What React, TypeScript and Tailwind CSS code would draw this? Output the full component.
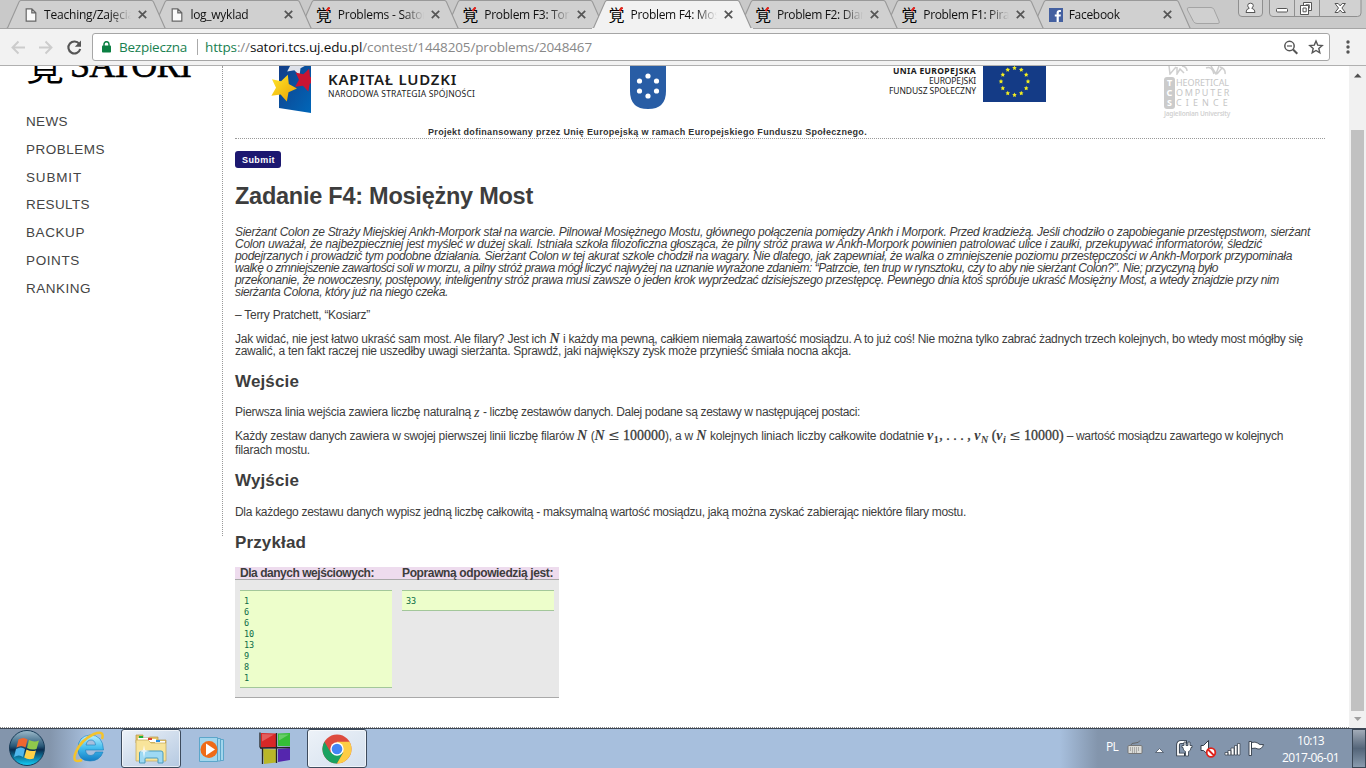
import { useLayoutEffect, useRef, type ReactNode } from "react";

/* A single line of text whose letter spacing is computed to fill a given width. */
function Fit({ w, className = "", children }: { w: number; className?: string; children: ReactNode }) {
  const ref = useRef<HTMLSpanElement>(null);
  useLayoutEffect(() => {
    const el = ref.current;
    if (!el) return;
    el.style.letterSpacing = "0px";
    const w0 = el.getBoundingClientRect().width;
    el.style.letterSpacing = "1px";
    const w1 = el.getBoundingClientRect().width;
    el.style.letterSpacing = w1 > w0 ? `${(w - w0) / (w1 - w0)}px` : "0px";
  }, [w]);
  return (
    <div className={`flex whitespace-pre ${className}`}>
      <span ref={ref} className="inline-block shrink-0">{children}</span>
    </div>
  );
}

function PageIcon() {
  return (
    <svg width="12" height="14" viewBox="0 0 12 14" fill="#fafafa" stroke="#666" strokeWidth="1.2">
      <path d="M1.2.8h5.6l4 4v8.4H1.2zM6.8.8v4h4" />
    </svg>
  );
}

function KanjiIcon() {
  return (
    <span className="relative block h-4 w-4 font-['Noto_Sans_CJK_JP',sans-serif] text-[16px] leading-[15px] text-black">
      覚
      <svg className="absolute top-0 left-[9px]" width="5" height="5" viewBox="0 0 5 5">
        <path d="M4.5.3 1.5 4" stroke="#e8231e" strokeWidth="2" />
      </svg>
    </span>
  );
}

function FacebookIcon() {
  return (
    <svg width="14" height="14" viewBox="0 0 14 14">
      <rect width="14" height="14" fill="#4460a0" />
      <path d="M7.6 14V8.6H5.8V6.5h1.8V4.8c0-1.9 1.1-2.9 2.8-2.9h1.5v2h-1c-.9 0-1.1.4-1.1 1.1v1.5h2.1l-.3 2.1H9.8V14z" fill="#fff" />
    </svg>
  );
}

type Tab = { title: string; icon: "page" | "kanji" | "fb"; w: number; z: string; active?: boolean };
const tabs: Tab[] = [
  { title: "Teaching/Zajęcia", icon: "page", w: 90, z: "z-[8]" },
  { title: "log_wyklad", icon: "page", w: 58, z: "z-[7]" },
  { title: "Problems - Sator", icon: "kanji", w: 89, z: "z-[6]" },
  { title: "Problem F3: Tort", icon: "kanji", w: 89, z: "z-[5]" },
  { title: "Problem F4: Mos", icon: "kanji", w: 89, z: "z-[9]", active: true },
  { title: "Problem F2: Dian", icon: "kanji", w: 90, z: "z-[3]" },
  { title: "Problem F1: Pirat", icon: "kanji", w: 90, z: "z-[2]" },
  { title: "Facebook", icon: "fb", w: 51, z: "z-[1]" },
];

function TabItem({ tab }: { tab: Tab }) {
  return (
    <div className={`relative flex h-[29px] w-[146.4px] shrink-0 items-center pl-[18px] ${tab.z}`}>
      <svg className="absolute top-0 left-0" width="162" height="29" viewBox="0 0 162 29">
        <path d="M0 28.5L1.500 28L13 2Q14 .5 15 .5H145.500Q146.500 .5 147.500 2L159 28L160 28.500" fill={tab.active ? "#f2f2f2" : "#d0d0d0"} stroke="#999" strokeWidth="1.1" />
        <path d="M0 28.500H161" stroke={tab.active ? "#f2f2f2" : "#a5a5a5"} />
      </svg>
      <div className="relative flex w-5 items-center">
        {tab.icon === "page" ? <span className="pl-[1px]"><PageIcon /></span> : tab.icon === "kanji" ? <span className="-ml-[1px]"><KanjiIcon /></span> : <FacebookIcon />}
      </div>
      <div className={`relative w-[87px] overflow-hidden [mask-image:linear-gradient(to_right,black_66px,transparent_87px)] ${tab.icon === "kanji" ? "pl-[1px]" : ""}`}>
        <Fit w={tab.w} className="text-[12px] leading-[18px] text-[#111]">{tab.title}</Fit>
      </div>
      <svg className="relative ml-[7px]" width="9" height="9" viewBox="0 0 9 9" stroke="#555" strokeWidth="1.7">
        <path d="M.8.8l7.400 7.400M8.200.8L.8 8.200" />
      </svg>
    </div>
  );
}

function WindowControls() {
  return (
    <div className="absolute top-0 right-0 z-10 flex pr-[3px]">
      <svg width="125" height="18" viewBox="0 0 125 18" fill="#d1d1d1" stroke="#8f8f8f">
        <path d="M.5 0v13q0 3.500 3.500 3.500h17q3.500 0 3.500-3.500V0" />
        <path d="M31.500 0v13q0 3.500 3.500 3.500h84.500q3.500 0 3.500-3.500V0M56.500 0v16M81.500 0v16" />
        <g stroke="#555" fill="#fff">
          <path d="M8 12.500q0-3.500 3.300-4.300-1.600-1-1.600-2.700 0-2.300 2.800-2.300t2.800 2.300q0 1.700-1.600 2.700 3.300.8 3.300 4.300z" />
          <rect x="38.500" y="8.500" width="11" height="3.500" rx="1" />
          <path d="M65.500 2.500h8v8h-8zM67.800 4.800h3.500v3.500h-3.500z" />
          <path d="M62.500 5.500h8v9h-8zM65 8h3.200v3.800H65z" />
          <path d="M97 3.500h3.200l2 2.400 2-2.400h3.200l-3.500 4.500 3.500 4.500h-3.200l-2-2.400-2 2.400H97l3.500-4.500z" />
        </g>
      </svg>
    </div>
  );
}

function Chrome() {
  return (
    <header className="shrink-0">
      <div className="relative flex h-[29px] border-b border-[#a5a5a5] bg-[#c9c9c9] pl-[6px]">
        {tabs.map((t) => <TabItem key={t.title} tab={t} />)}
        <svg className="ml-[9px] mt-[6px]" width="36" height="19" viewBox="0 0 36 19">
          <path d="M3 1.500H25q2 0 3 2L33 15q1 2.500-1 2.500H11q-2.500 0-3.500-2L1.500 4Q.5 1.500 3 1.500z" fill="#d0d0d0" stroke="#a4a4a4" />
        </svg>
        <WindowControls />
      </div>
      <div className="flex h-[37px] items-center border-b border-[#b0b0b0] bg-[#f2f2f2] pb-[1px] pl-[10px]">
        <svg width="82" height="20" viewBox="0 0 82 20" fill="none" stroke="#ccc" strokeWidth="1.9">
          <path d="M15 10.500H2.500M8.500 4.500l-6 6 6 6M29 10.500h12.500M35.500 4.500l6 6-6 6" />
          <path d="M69.300 7A6 6 0 1 0 70.200 12" stroke="#555" strokeWidth="2.100" />
          <path d="M71 3.500v6.200h-6.200z" fill="#555" stroke="none" />
        </svg>
        <div className="flex h-[28px] w-[1238px] items-center rounded-[3px] border border-[#a6a6a6] bg-white pl-[9px]">
          <svg width="9" height="12" viewBox="0 0 9 12">
            <rect x="0" y="4.500" width="9" height="7" rx=".8" fill="#0b8043" />
            <path d="M2 5V3.200a2.500 2.500 0 0 1 5 0V5" fill="none" stroke="#0b8043" strokeWidth="1.500" />
          </svg>
          <Fit w={68} className="ml-[8px] w-[78px] text-[13.500px] leading-[20px] text-[#188050]">Bezpieczna</Fit>
          <div className="mr-[7px] h-[16px] w-px bg-[#aaa]" />
          <Fit w={387} className="w-[1078px] text-[13.500px] leading-[20px] text-[#888]">
            <span className="text-[#188050]">https</span>://<span className="text-[#111]">satori.tcs.uj.edu.pl</span>/contest/1448205/problems/2048467
          </Fit>
          <svg width="42" height="16" viewBox="0 0 42 16" fill="none" stroke="#555" strokeWidth="1.500">
            <circle cx="6.500" cy="7" r="4.700" /><path d="M10 10.500l4.300 4.300" strokeWidth="2" /><path d="M4 7h5" strokeWidth="1.200" />
            <path d="M33 2l1.700 4.100 4.500.4-3.400 2.900 1 4.400L33 11.500l-3.800 2.300 1-4.400-3.400-2.900 4.500-.4z" strokeWidth="1.400" />
          </svg>
        </div>
        <svg className="ml-[16px]" width="4" height="14" viewBox="0 0 4 14" fill="#555">
          <circle cx="2" cy="2" r="1.700" /><circle cx="2" cy="7" r="1.700" /><circle cx="2" cy="12" r="1.700" />
        </svg>
      </div>
    </header>
  );
}

const nav: [string, number][] = [["NEWS", 42], ["PROBLEMS", 79], ["SUBMIT", 56], ["RESULTS", 64], ["BACKUP", 59], ["POINTS", 54], ["RANKING", 65]];

function Sidebar() {
  return (
    <aside className="h-[470px] w-[223px] shrink-0 border-r border-dotted border-[#999] pl-[26px]">
      <div className="flex h-[42px] items-start overflow-hidden text-black">
        <span className="-mt-[21px] w-[44px] font-['Noto_Sans_CJK_JP',sans-serif] text-[38px] leading-[38px]">覚</span>
        <Fit w={121} className="-mt-[19px] font-['Liberation_Serif',serif] text-[36px] leading-[36px] [-webkit-text-stroke:0.600px_#000]">SATORI</Fit>
      </div>
      <nav className="flex flex-col">
        {nav.map(([label, w]) => (
          <Fit key={label} w={w} className="h-[27.800px] text-[13.500px] leading-[27px] text-[#444]">{label}</Fit>
        ))}
      </nav>
    </aside>
  );
}

function Star({ cx, cy, r, fill, rot = 0 }: { cx: number; cy: number; r: number; fill: string; rot?: number }) {
  const pts = Array.from({ length: 10 }, (_, i) => {
    const a = (Math.PI / 5) * i - Math.PI / 2 + rot;
    const q = i % 2 ? r * 0.5 : r;
    return `${cx + q * Math.cos(a)},${cy + q * Math.sin(a)}`;
  }).join(" ");
  return <polygon points={pts} fill={fill} />;
}

function Sponsors() {
  return (
    <div className="flex h-[60px] items-start overflow-hidden font-['Noto_Sans',sans-serif] text-[#1b1b1b]">
      <svg className="ml-[36px] shrink-0" width="41" height="48" viewBox="0 0 41 48">
        <defs>
          <linearGradient id="kl" x1="0" y1="0" x2="1" y2="1"><stop offset="0" stopColor="#123d87" /><stop offset="1" stopColor="#0067b9" /></linearGradient>
          <linearGradient id="gold" x1="0" y1="0" x2="1" y2="1"><stop offset="0" stopColor="#ffe72c" /><stop offset="1" stopColor="#eaa000" /></linearGradient>
        </defs>
        <path d="M8 0h32v47L8 42z" fill="url(#kl)" />
        <Star cx={25} cy={-1} r={11} fill="#dfe2ea" rot={0.3} />
        <Star cx={34} cy={14} r={12} fill="#c91432" rot={0.35} />
        <path d="M40 0v30h1V0z" fill="#fff" />
        <Star cx={12} cy={22} r={14} fill="url(#gold)" rot={0.35} />
      </svg>
      <div className="ml-[16px] w-[301px] pt-[5px]">
        <Fit w={129} className="text-[15px] leading-[17px] font-semibold">KAPITAŁ LUDZKI</Fit>
        <Fit w={147} className="text-[8.500px] leading-[12px]">NARODOWA STRATEGIA SPÓJNOŚCI</Fit>
      </div>
      <svg width="38" height="44" viewBox="0 0 38 44">
        <path d="M1 0h36v25q0 18-18 18T1 25z" fill="#285da5" />
        <g fill="#fff"><circle cx="19" cy="10" r="2.600" /><circle cx="10.500" cy="15" r="2.600" /><circle cx="27.500" cy="15" r="2.600" /><circle cx="10.500" cy="25" r="2.600" /><circle cx="27.500" cy="25" r="2.600" /><circle cx="19" cy="30" r="2.600" /></g>
      </svg>
      <div className="ml-[222px] flex w-[87px] flex-col items-end text-[8.500px] leading-[10px]">
        <Fit w={83} className="font-bold">UNIA EUROPEJSKA</Fit>
        <Fit w={47}>EUROPEJSKI</Fit>
        <Fit w={87}>FUNDUSZ SPOŁECZNY</Fit>
      </div>
      <svg className="ml-[7px] shrink-0" width="63" height="36" viewBox="0 0 63 36">
        <path d="M0 0h63v36H0z" fill="#143b86" />
        {Array.from({ length: 12 }, (_, i) => <Star key={i} cx={31.5 + 13.500 * Math.cos((i * Math.PI) / 6)} cy={15.500 + 13.500 * Math.sin((i * Math.PI) / 6)} r={2.400} fill="#f4ee20" />)}
      </svg>
      <div className="ml-[118px] flex w-[68px] flex-col text-[#d2d2d2]">
        <svg width="68" height="9" viewBox="0 0 68 9" fill="none" stroke="#cfcfcf" strokeWidth="1.500">
          <path d="M5 0l1 8 6-7M13 1v7l3-5 4 4M18 0q5 1 5 5M42 2q6-2 8 6M47 0l5 8 3-8M56 1q6 2 5 7M53 8l5-6" />
        </svg>
        <div className="flex">
          <div className="mt-[2px] flex h-[32px] w-[11px] shrink-0 flex-col items-center justify-center rounded-[3px] bg-[#cbcbcb] text-[9px] leading-[10px] font-bold text-white">
            <span>T</span><span>C</span><span>S</span>
          </div>
          <div className="ml-[1px] w-[55px] shrink-0 pt-[3px] text-[9px] leading-[10px] text-[#c6c6c6]">
            <Fit w={53}>HEORETICAL</Fit><Fit w={55}>OMPUTER</Fit><Fit w={56}>CIENCE</Fit>
          </div>
        </div>
        <Fit w={66} className="mt-[1px] text-[6.500px] leading-[8px] font-semibold">Jagiellonian University</Fit>
      </div>
    </div>
  );
}

function M({ children, className = "font-bold" }: { children: ReactNode; className?: string }) {
  return <span className={`font-['Liberation_Serif',serif] text-[14px] leading-[0] tracking-[0.500px] italic ${className}`}>{children}</span>;
}
function D({ children }: { children: ReactNode }) {
  return <span className="font-['Liberation_Serif',serif] text-[14px] leading-[0] tracking-normal [-webkit-text-stroke:0.300px_#333]">{children}</span>;
}
function Leq() {
  return <span className="px-[3px] font-['DejaVu_Serif',serif] text-[14px] leading-[0] tracking-normal">≤</span>;
}
function Sub({ children }: { children: ReactNode }) {
  return <span className="relative top-[3px] font-['Liberation_Serif',serif] text-[10px] leading-[0] font-bold tracking-[0.500px]">{children}</span>;
}

const quote: [string, number][] = [
  ["Sierżant Colon ze Straży Miejskiej Ankh-Morpork stał na warcie. Pilnował Mosiężnego Mostu, głównego połączenia pomiędzy Ankh i Morpork. Przed kradzieżą. Jeśli chodziło o zapobieganie przestępstwom, sierżant", 1075],
  ["Colon uważał, że najbezpieczniej jest myśleć w dużej skali. Istniała szkoła filozoficzna głosząca, że pilny stróż prawa w Ankh-Morpork powinien patrolować ulice i zaułki, przekupywać informatorów, śledzić", 1027],
  ["podejrzanych i prowadzić tym podobne działania. Sierżant Colon w tej akurat szkole chodził na wagary. Nie dlatego, jak zapewniał, że walka o zmniejszenie poziomu przestępczości w Ankh-Morpork przypominała", 1057],
  ["walkę o zmniejszenie zawartości soli w morzu, a pilny stróż prawa mógł liczyć najwyżej na uznanie wyrażone zdaniem: “Patrzcie, ten trup w rynsztoku, czy to aby nie sierżant Colon?”. Nie; przyczyną było", 983],
  ["przekonanie, że nowoczesny, postępowy, inteligentny stróż prawa musi zawsze o jeden krok wyprzedzać dzisiejszego przestępcę. Pewnego dnia ktoś spróbuje ukraść Mosiężny Most, a wtedy znajdzie przy nim", 1044],
  ["sierżanta Colona, który już na niego czeka.", 213],
];

function Pre({ lines }: { lines: string[] }) {
  return (
    <div className="w-[152px] border-y border-[#a3c79a] bg-[#edfecb] px-[4px] pt-[5px] pb-[3px] font-['DejaVu_Sans_Mono',monospace] text-[8.500px] leading-[11px] text-[#0b6b45]">
      {lines.map((l, i) => <div key={i}>{l}</div>)}
    </div>
  );
}

function Content() {
  return (
    <main className="flex w-[1102px] shrink-0 flex-col pl-[12px] text-[12px] leading-[12px] text-[#3d3d3d]">
      <Sponsors />
      <div className="h-[13px] border-b border-dotted border-[#999] pl-[193px]">
        <Fit w={439} className="text-[9px] leading-[12px] font-bold text-[#333]">Projekt dofinansowany przez Unię Europejską w ramach Europejskiego Funduszu Społecznego.</Fit>
      </div>
      <div className="mt-[12px] h-[17px] w-[46px] rounded-[3px] bg-[#1c1870] pl-[7px]">
        <Fit w={33} className="text-[9px] leading-[18px] font-bold text-white">Submit</Fit>
      </div>
      <h1 className="mt-[14px]"><Fit w={298} className="h-[28px] text-[23.500px] leading-[28px] font-bold">Zadanie F4: Mosiężny Most</Fit></h1>
      <div className="mt-[16px] italic">{quote.map(([t, w], i) => <Fit key={i} w={w}>{t}</Fit>)}</div>
      <Fit w={135} className="mt-[11px]">– Terry Pratchett, “Kosiarz”</Fit>
      <div className="mt-[12px]">
        <div className="flex h-[12px]">
          <Fit w={325} className="w-[325px]">Jak widać, nie jest łatwo ukraść sam most. Ale filary? Jest ich <M>N</M></Fit>
          <Fit w={743}>{" "}i każdy ma pewną, całkiem niemałą zawartość mosiądzu. A to już coś! Nie można tylko zabrać żadnych trzech kolejnych, bo wtedy most mógłby się</Fit>
        </div>
        <Fit w={616}>zawalić, a ten fakt raczej nie uszedłby uwagi sierżanta. Sprawdź, jaki największy zysk może przynieść śmiała nocna akcja.</Fit>
      </div>
      <h2 className="mt-[15px]"><Fit w={64} className="h-[20px] text-[17px] leading-[20px] font-bold">Wejście</Fit></h2>
      <div className="mt-[14px] flex h-[12px]">
        <Fit w={245} className="w-[248px]">Pierwsza linia wejścia zawiera liczbę naturalną <M className="relative top-[1px]">z</M></Fit>
        <Fit w={377}>- liczbę zestawów danych. Dalej podane są zestawy w następującej postaci:</Fit>
      </div>
      <div className="mt-[12px]">
        <div className="flex h-[14px]">
          <Fit w={342} className="w-[342px]">Każdy zestaw danych zawiera w swojej pierwszej linii liczbę filarów{" "}</Fit>
          <Fit w={350} className="w-[350px]"><M>N</M> (<M>N</M><Leq /><D>100000</D>), a w <M>N</M> kolejnych liniach liczby całkowite dodatnie{" "}</Fit>
          <Fit w={356}><M>v</M><Sub>1</Sub><D>, . . . , </D><M>v</M><Sub><i>N</i></Sub> <D>(</D><M>v</M><Sub><i>i</i></Sub><Leq /><D>10000)</D> – wartość mosiądzu zawartego w kolejnych</Fit>
        </div>
        <Fit w={75}>filarach mostu.</Fit>
      </div>
      <h2 className="mt-[15px]"><Fit w={64} className="h-[20px] text-[17px] leading-[20px] font-bold">Wyjście</Fit></h2>
      <Fit w={731} className="mt-[15px]">Dla każdego zestawu danych wypisz jedną liczbę całkowitą - maksymalną wartość mosiądzu, jaką można zyskać zabierając niektóre filary mostu.</Fit>
      <h2 className="mt-[15px]"><Fit w={71} className="h-[20px] text-[17px] leading-[20px] font-bold">Przykład</Fit></h2>
      <section className="mt-[14px] h-[131px] w-[324px] border-b border-[#a9a9a9] bg-[#e8e8e8]">
        <div className="flex h-[13px] border-b border-[#a9a9a9] bg-[#eedcee] pl-[5px] font-bold">
          <Fit w={134} className="w-[162px]">Dla danych wejściowych:</Fit>
          <Fit w={151}>Poprawną odpowiedzią jest:</Fit>
        </div>
        <div className="flex items-start gap-[10px] px-[5px] pt-[10px]">
          <Pre lines={["1", "6", "6", "10", "13", "9", "8", "1"]} />
          <Pre lines={["33"]} />
        </div>
      </section>
    </main>
  );
}

function Scrollbar() {
  return (
    <div className="flex w-[17px] shrink-0 flex-col items-center bg-[#f1f1f1] pt-[7px]">
      <svg width="8" height="5" viewBox="0 0 8 5"><path d="M0 4.500h7.500L3.700.5z" fill="#505050" /></svg>
      <div className="mt-[52px] h-[581px] w-[13px] bg-[#c1c1c1]" />
      <svg className="mt-[6px]" width="8" height="5" viewBox="0 0 8 5"><path d="M0 0h7.500L3.700 4z" fill="#a0a0a0" /></svg>
    </div>
  );
}

function Taskbar() {
  return (
    <footer className="flex h-[40px] shrink-0 items-center border-t border-[#3c4654] bg-[linear-gradient(to_right,#8395ac_0,#8395ac_50px,#a7bfdd_88px,#a7bfdd_1060px,#8395ac_1098px)]">
      <svg width="121" height="39" viewBox="0 0 121 39">
        <defs>
          <linearGradient id="orb" x1="0" y1="0" x2="0" y2="1"><stop offset="0" stopColor="#9dbbcb" /><stop offset=".45" stopColor="#285777" /><stop offset=".55" stopColor="#092b4e" /><stop offset="1" stopColor="#12d1fb" /></linearGradient>
          <linearGradient id="ie" x1="0" y1="0" x2="0" y2="1"><stop offset="0" stopColor="#bdf1ff" /><stop offset=".5" stopColor="#44bdee" /><stop offset="1" stopColor="#127cc4" /></linearGradient>
        </defs>
        <circle cx="27" cy="19" r="17.500" fill="url(#orb)" stroke="#193c59" />
        <path d="M18.500 10.500q5-3 9 0l-2 8q-4-3-9 0z" fill="#ef6630" />
        <path d="M29 11q5 2.500 10 .5l-2.500 8.500q-5 1.500-9.500-1z" fill="#90c84b" />
        <path d="M16 20q5-3 9 0l-2 8q-4-3-9 0z" fill="#4fb6ec" />
        <path d="M26.500 20.500q4.500 2.500 9.500 1l-2.300 8q-5 2-9.500-1z" fill="#ffd147" />
        <path d="M103 23q-3 9-13 9-12 0-12-12.500T90 6q13 0 13.500 15H85.500q.5 5.500 5.500 5.500 3 0 4.500-3.500zM86 16h9.500q-.5-5-4.500-5t-5 5z" fill="url(#ie)" stroke="#1a7dbb" strokeWidth=".6" />
        <path d="M82 31Q71 35 76 23 81 11 94 5q11-4 8 5" fill="none" stroke="#f3c32c" strokeWidth="2.500" />
      </svg>
      <div className="flex h-[39px] w-[60px] items-center justify-center rounded-[3px] border border-[#3d4b5d] bg-linear-to-br from-[#edf2f8] to-[#b5c9e1] ring-1 ring-white/60 ring-inset">
        <svg width="34" height="32" viewBox="0 0 34 32">
          <path d="M2 5V2h7v3h5l2-1h8v3h8v3H2z" fill="#e5c76b" stroke="#b9974a" strokeWidth=".7" />
          <path d="M4 5h10v3H4zM13 6h9v3h-9zM21 8h10v3H21z" fill="#fff" />
          <path d="M5 3h4v2H5z" fill="#18b238" /><path d="M14 5h4v2h-4z" fill="#dc4031" /><path d="M22 7h4v2h-4z" fill="#278fe0" />
          <path d="M2 7h12l3 3h15v18H2z" fill="#f8e49a" stroke="#c3a657" strokeWidth=".7" />
          <path d="M5.500 30V20q0-2 2-2H27q2 0 2 2v10h-5v-4q0-1-1-1H12q-1 0-1 1v4z" fill="#9ed9f3" stroke="#4b9bbd" />
          <path d="M10 12l1 5 5 1-5 1-1 6-1-6-5-1 5-1z" fill="#fff" opacity=".8" />
        </svg>
      </div>
      <svg className="ml-[17px]" width="94" height="36" viewBox="0 0 94 36">
        <path d="M1.500 6.500h18v24h-18zM19.500 7.500h3v22.500h-3zM22.500 8.500h3v21h-3z" fill="#a3d6ed" stroke="#5ca6ca" />
        <circle cx="11" cy="18.500" r="8.500" fill="#ef6b18" /><path d="M8 12.500v12l9-6z" fill="#fff" />
        <path d="M63 2l15 .5v15L63 16.500z" fill="#d82727" /><path d="M80 2.500l12-.5v13H80z" fill="#35bd37" />
        <path d="M65 18l13 .5v13L66 33z" fill="#b9b728" /><path d="M80 18l12-1v12l-12 2z" fill="#5526ae" />
        <path d="M62 1.500V16l2.500 2V33M78.500 2v30M62 17l30-.5" fill="none" stroke="#252525" strokeWidth="1.300" />
        <path d="M64 3l12 .5-12 7zM81 3.500h10l-10 6z" fill="#fff" opacity=".25" />
      </svg>
      <div className="ml-[15px] flex h-[39px] w-[60px] items-center justify-center rounded-[3px] border border-[#3d4b5d] bg-linear-to-br from-[#edf2f8] to-[#d4e0ee] ring-1 ring-white/60 ring-inset">
        <svg width="30" height="30" viewBox="0 0 30 30">
          <circle cx="15" cy="15" r="14.500" fill="#dd4b3e" />
          <path d="M2.440 7.750A14.500 14.500 0 0 0 15 29.500L21.300 18.600 15 15l-6.300 3.600z" fill="#1aa260" />
          <path d="M15 29.500A14.500 14.500 0 0 0 27.560 7.750H15V15l6.300 3.600z" fill="#fdcd45" />
          <circle cx="15" cy="15" r="6.700" fill="#fff" /><circle cx="15" cy="15" r="5.300" fill="#4285f4" />
        </svg>
      </div>
      <Fit w={12} className="mr-[9px] mb-[4px] ml-auto text-[12px] leading-[16px] text-white">PL</Fit>
      <svg width="147" height="24" viewBox="0 0 147 24" fill="none">
        <path d="M1 9.500q0-1 1-1h12q1 0 1 1v6q0 1-1 1H2q-1 0-1-1z" fill="#dcdcd8" stroke="#6f6f6f" strokeWidth=".9" />
        <path d="M3 11h10M3 13h10M5 15h6" stroke="#777" strokeDasharray="1 1" /><path d="M4 8q0-2 4-2t5-2.500" stroke="#666" />
        <path d="M28.500 15.500l4-4 4 4z" fill="#fff" stroke="#4a5564" strokeWidth=".8" />
        <path d="M60 5h-6q-3 0-3 3v9.500h7" stroke="#333d49" strokeWidth="3.600" /><path d="M59 5h-5q-3 0-3 3v9.500h6" stroke="#fff" strokeWidth="1.800" />
        <path d="M55 8.500h2V5h2v3.500h2V5h2v3.500h2v2h-1q0 3.500-2.500 4V19h-3v-4.500q-2.500-.5-2.500-4h-1z" fill="#fff" stroke="#333d49" strokeWidth=".8" />
        <path d="M74 8.500h2.500l5-5V18l-5-4.500H74z" fill="#fff" stroke="#333d49" />
        <circle cx="84" cy="15.500" r="4.300" fill="#fff" stroke="#df231b" strokeWidth="1.800" /><path d="M81 12.500l6 6" stroke="#df231b" strokeWidth="1.800" />
        <path d="M98 15.500h3V18h-3zM101 13.500h3V18h-3zM104 11h3v7h-3zM107.500 8.500h2.500V18h-2.500zM110.500 6.500h2.500V18h-2.500z" fill="#fff" stroke="#333d49" strokeWidth=".7" />
        <path d="M122 4.500h2.500v14H122zM124.500 5.500q4-1 6 .5 2 2.500 6 1.500-1.500 5-5.500 4.500-2.500-1.500-6.500-.5z" fill="#fff" stroke="#333d49" strokeWidth=".9" />
      </svg>
      <div className="flex w-[74px] flex-col items-center pr-[1px] text-[12px] leading-[17px] text-white">
        <Fit w={27}>10:13</Fit><Fit w={57}>2017-06-01</Fit>
      </div>
      <div className="ml-[4px] h-[39px] w-[14px] border border-[#3b4857] bg-linear-to-b from-[#a3acb8] via-[#546579] to-[#899bae]" />
    </footer>
  );
}

export default function App() {
  return (
    <div className="flex h-[768px] w-[1366px] flex-col overflow-hidden bg-white font-['Open_Sans',sans-serif]">
      <Chrome />
      <div className="flex h-[662px] shrink-0 justify-between overflow-hidden">
        <div className="flex h-full w-[1349px] border-b border-dotted border-[#888] font-['Liberation_Sans',sans-serif]">
          <Sidebar />
          <Content />
        </div>
        <Scrollbar />
      </div>
      <Taskbar />
    </div>
  );
}
